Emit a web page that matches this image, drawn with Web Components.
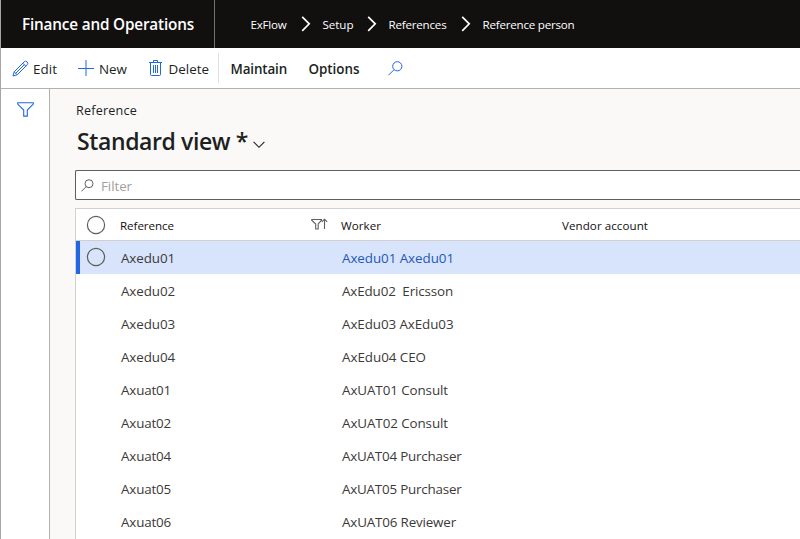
<!DOCTYPE html>
<html lang="en">
<head>
<meta charset="utf-8">
<title>Reference person</title>
<style>
html,body{margin:0;height:100%;overflow:hidden;background:#fff;font-family:"Open Sans","Noto Sans",sans-serif;color:#201f1e}
</style>
</head>
<body>
<fo-app></fo-app>
<script>
// Single-line label: `w` is the target width, reached by adjusting the tracking.
class UiText extends HTMLElement {
  connectedCallback() {
    const size = this.getAttribute('size') || 13.4;
    const root = this.attachShadow({mode: 'open'});
    root.innerHTML = `<style>
      :host{display:inline-block;white-space:pre;flex:none;font-size:${size}px;line-height:20px}
      span{display:inline-block}
    </style><span><slot></slot></span>`;
    const w = +this.getAttribute('w');
    const span = root.querySelector('span');
    const n = this.textContent.length;
    if (w) {
      const spacing = (w - span.getBoundingClientRect().width) / n;
      span.style.letterSpacing = spacing.toFixed(3) + 'px';
      this.style.width = w + 'px';
    }
  }
}
const ICONS = {
  edit: [17, 17, '<path d="M1 16 2.2 11.8 12.2 1.8Q13.6.5 15.1 1.9 16.5 3.3 15.2 4.8L5.2 14.8ZM2.2 11.8 5.2 14.8M10.8 3.2 13.8 6.2M3.7 13.3 12.3 4.7"/>'],
  add: [16, 16, '<path d="M8 0V16M0 8.5H16"/>'],
  del: [13, 17, '<path d="M0 2.5H13M4.5 2.5V.5H8.5V2.5M1.5 2.5V14.5Q1.5 15.5 2.5 15.5H10.5Q11.5 15.5 11.5 14.5V2.5M4.5 5V13M6.5 5V13M8.5 5V13"/>'],
  search: [15, 15, '<circle cx="9.3" cy="5.3" r="4.6"/><path d="M6 8.7.5 14.2"/>'],
  find: [13, 13, '<circle cx="8" cy="4.7" r="4"/><path d="M5.2 7.6.4 12.4"/>'],
  funnel: [17, 15, '<path d="M.7.7H16.3V2.1L10.3 8.1V14.1H6.7V8.1L.7 2.1Z"/>'],
  sorted: [17, 12, '<path d="M.7 1.5H10.5V2.2L7.2 6V11H4.7V6L.7 2.2ZM13.5 11V1.3M10.8 3.9 13.5 1.2 16.2 3.9"/>'],
  crumb: [10, 16, '<path d="M1.2.8 8.2 7.8 1.2 14.9"/>'],
  down: [12, 8, '<path d="M.6.9 6 6.3 11.4.9"/>'],
  circle: [20, 20, '<circle cx="10" cy="10" r="8.6"/>']
};
class UiIcon extends HTMLElement {
  connectedCallback() {
    const [w, h, body] = ICONS[this.getAttribute('name')];
    this.attachShadow({mode: 'open'}).innerHTML = `<style>
      :host{display:block;flex:none;width:${w}px;height:${h}px}
      svg{display:block;fill:none;stroke:currentColor;stroke-width:var(--stroke,1)}
    </style><svg width="${w}" height="${h}" viewBox="0 0 ${w} ${h}">${body}</svg>`;
  }
}
class FoHeader extends HTMLElement {
  connectedCallback() {
    this.attachShadow({mode: 'open'}).innerHTML = `<style>
      :host{display:flex;height:48px;background:#11100f;color:#fff}
      .brand{width:214px;box-sizing:border-box;padding:13px 0 0 21px;border-right:1px solid #72706e;font-weight:600}
      nav{display:grid;grid-template-columns:72px 66px 94px 100px;padding:15px 0 0 35.5px}
      .c{display:flex;justify-content:space-between}
      ui-icon{--stroke:1.7;margin:1px 12px 0 0}
    </style>
    <div class="brand"><ui-text size="15.3" w="172">Finance and Operations</ui-text></div>
    <nav>
      <div class="c"><ui-text size="11.6" w="36">ExFlow</ui-text><ui-icon name="crumb"></ui-icon></div>
      <div class="c"><ui-text size="11.6" w="31">Setup</ui-text><ui-icon name="crumb"></ui-icon></div>
      <div class="c"><ui-text size="11.6" w="58">References</ui-text><ui-icon name="crumb"></ui-icon></div>
      <div class="c"><ui-text size="11.6" w="92">Reference person</ui-text></div>
    </nav>`;
  }
}
class FoToolbar extends HTMLElement {
  connectedCallback() {
    this.attachShadow({mode: 'open'}).innerHTML = `<style>
      :host{display:flex;height:40px;background:#fff;border-bottom:1px solid #b3b0ad}
      .b{display:flex;padding-top:12px;box-sizing:border-box}
      .b ui-icon{color:#2266e3}
      .b ui-text{margin-top:-1px}
      .menu{font-weight:600}
      .sep{width:1px;height:30px;margin-top:5px;background:#e1dfdd}
    </style>
    <div class="b" style="width:66px;padding-left:11px;gap:4px"><ui-icon name="edit"></ui-icon><ui-text w="24">Edit</ui-text></div>
    <div class="b" style="width:70px;padding-left:11px;gap:5px"><ui-icon name="add"></ui-icon><ui-text w="28">New</ui-text></div>
    <div class="b" style="width:81px;padding-left:12px;gap:6.5px"><ui-icon name="del"></ui-icon><ui-text w="40.5">Delete</ui-text></div>
    <div class="sep"></div>
    <div class="b menu" style="width:78px;padding-left:11.5px"><ui-text w="56.5">Maintain</ui-text></div>
    <div class="b menu" style="width:91px;padding-left:11.5px"><ui-text w="51">Options</ui-text></div>
    <div class="b"><ui-icon name="search" style="margin-top:1px"></ui-icon></div>`;
  }
}
class FoGrid extends HTMLElement {
  connectedCallback() {
    const rows = [['Axedu01',54,'Axedu01 Axedu01',112],['Axedu02',54,'AxEdu02  Ericsson',111],
      ['Axedu03',54,'AxEdu03 AxEdu03',111.5],['Axedu04',54,'AxEdu04 CEO',84],['Axuat01',50,'AxUAT01 Consult',106],
      ['Axuat02',50,'AxUAT02 Consult',106],['Axuat04',50,'AxUAT04 Purchaser',119.5],
      ['Axuat05',50,'AxUAT05 Purchaser',119.5],['Axuat06',50,'AxUAT06 Reviewer',114]];
    this.attachShadow({mode: 'open'}).innerHTML = `<style>
      :host{display:block;background:#fff;border:solid #d2d0ce;border-width:1px 0 0 1px;flex:1;overflow:hidden}
      .r{display:grid;grid-template-columns:44px 221px 221px 1fr;height:33px;color:#3b3a39}
      .head{height:31px;border-bottom:1px solid #d2d0ce;font-weight:500;color:#11100f}
      .head ui-text{margin-top:7px}
      .r:not(.head) ui-text{margin:7px 0 0 1px}
      .sel{background:#d8e4fc;box-shadow:inset 4px 0 #2266e3}
      .sel .w{color:#2458b8}
      .o{margin:6px 0 0 10px;color:#605e5c;--stroke:1.2}
      .ref{display:flex;justify-content:space-between}
      .ref ui-icon{margin:9px 13px 0 0;color:#605e5c;--stroke:1.1}
    </style>
    <div class="r head"><ui-icon class="o" name="circle"></ui-icon><div class="ref"><ui-text size="11.6" w="54">Reference</ui-text><ui-icon name="sorted"></ui-icon></div>
      <div><ui-text size="11.6" w="40">Worker</ui-text></div><div><ui-text size="11.6" w="86">Vendor account</ui-text></div></div>
    ${rows.map(([a, aw, b, bw], i) => `<div class="r ${i ? '' : 'sel'}">${i ? '<div></div>' : '<ui-icon class="o" name="circle"></ui-icon>'}<div><ui-text w="${aw}">${a}</ui-text></div><div class="w"><ui-text w="${bw}">${b}</ui-text></div></div>`).join('')}`;
  }
}
class FoPage extends HTMLElement {
  connectedCallback() {
    this.attachShadow({mode: 'open'}).innerHTML = `<style>
      :host{display:flex;flex-direction:column;flex:1;background:#faf9f8;padding:0 0 0 25px;overflow:hidden}
      .cap{height:32px;padding:9px 0 0 1px;box-sizing:border-box}
      .title{display:flex;height:49px;padding:10px 0 0 2px;box-sizing:border-box;font-weight:600}
      .title ui-icon{margin:10px 0 0 5px;--stroke:1.1}
      .filter{display:flex;height:28px;background:#fff;border:1px solid #605e5c;border-right:0;border-radius:2px 0 0 2px;margin-bottom:8px}
      .filter ui-icon{margin:8px 7px 0 5px;color:#605e5c}
      .filter ui-text{color:#a19f9d;margin-top:5px}
    </style>
    <div class="cap"><ui-text size="12.6" w="61">Reference</ui-text></div>
    <div class="title"><ui-text size="23" w="171">Standard view *</ui-text><ui-icon name="down"></ui-icon></div>
    <div class="filter"><ui-icon name="find"></ui-icon><ui-text w="31">Filter</ui-text></div>
    <fo-grid></fo-grid>`;
  }
}
class FoApp extends HTMLElement {
  connectedCallback() {
    this.attachShadow({mode: 'open'}).innerHTML = `<style>
      :host{display:flex;flex-direction:column;height:100vh;box-sizing:border-box;border-left:1px solid #a8a5a2}
      .main{display:flex;flex:1;min-height:0}
      aside{width:48px;border-right:1px solid #b3b0ad;background:#fff;color:#2266e3;flex:none}
      aside ui-icon{margin:13px 0 0 16px;--stroke:1.1}
    </style>
    <fo-header></fo-header><fo-toolbar></fo-toolbar>
    <div class="main"><aside><ui-icon name="funnel"></ui-icon></aside><fo-page></fo-page></div>`;
  }
}
customElements.define('ui-text', UiText);
customElements.define('ui-icon', UiIcon);
customElements.define('fo-header', FoHeader);
customElements.define('fo-toolbar', FoToolbar);
customElements.define('fo-grid', FoGrid);
customElements.define('fo-page', FoPage);
customElements.define('fo-app', FoApp);
</script>
</body>
</html>
